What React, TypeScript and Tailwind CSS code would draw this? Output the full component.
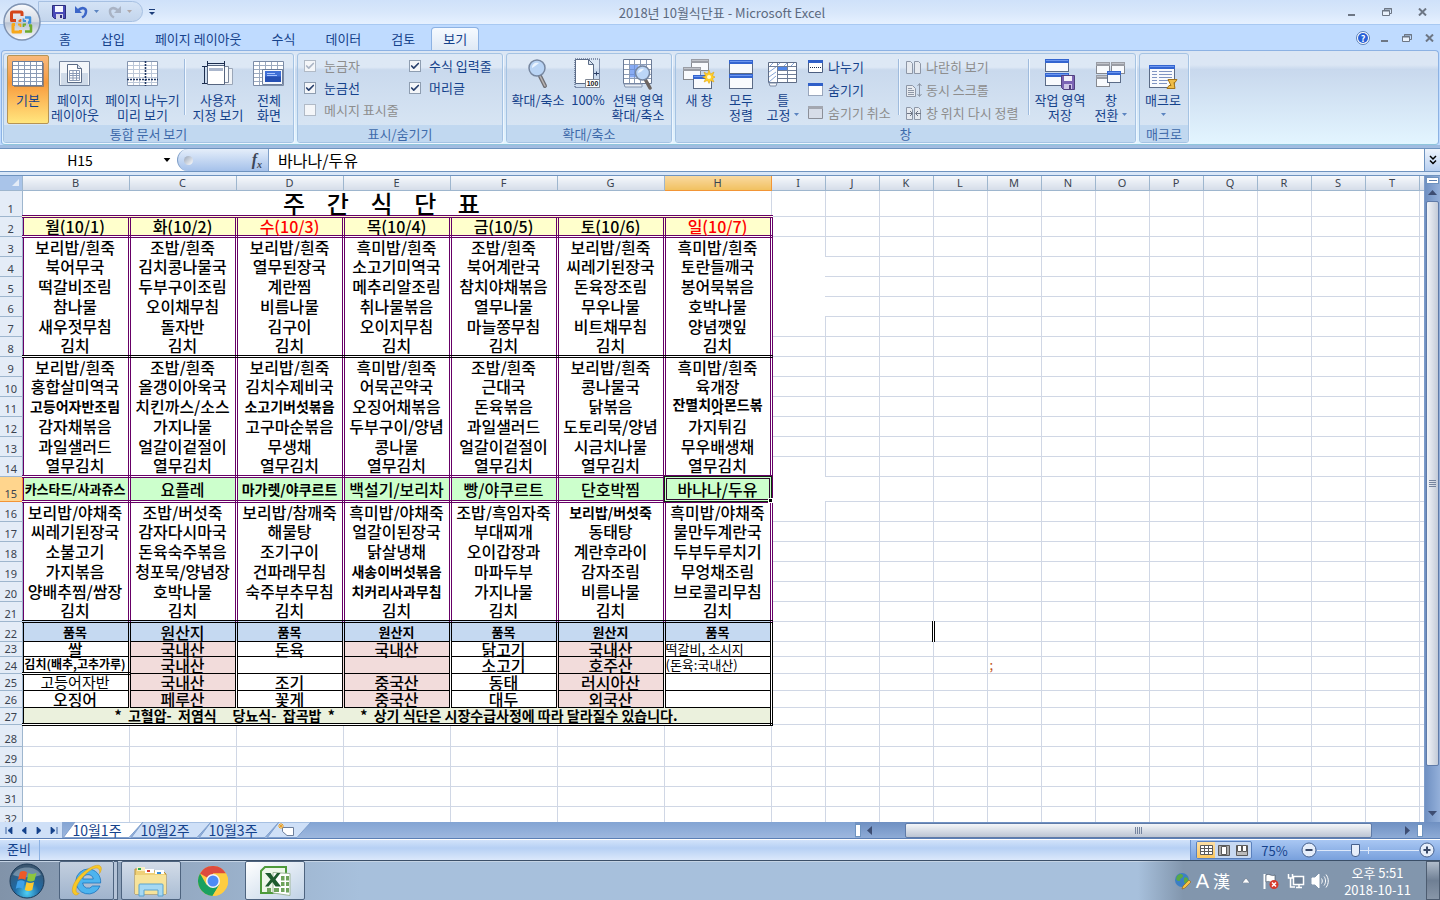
import React, { useState } from 'react';
import { Check } from 'lucide-react';

interface Cell {
  text: string;
  size: 'md' | 'note' | 'sm' | 'xs' | 'xxs';
}

const FONT = "font-['Noto_Sans_CJK_KR','Noto_Sans',sans-serif]";

const columns = ['B', 'C', 'D', 'E', 'F', 'G', 'H'];
const extraColumns = ['I', 'J', 'K', 'L', 'M', 'N', 'O', 'P', 'Q', 'R', 'S', 'T', ''];

const days = ['월(10/1)', '화(10/2)', '수(10/3)', '목(10/4)', '금(10/5)', '토(10/6)', '일(10/7)'];
const holidays = [2, 6];

// rows 3 - 21, a leading mark picks a smaller text size (see parse)
const meals: string[][] = [
  ['보리밥/흰죽', '조밥/흰죽', '보리밥/흰죽', '흑미밥/흰죽', '조밥/흰죽', '보리밥/흰죽', '흑미밥/흰죽'],
  ['북어무국', '김치콩나물국', '열무된장국', '소고기미역국', '북어계란국', '씨레기된장국', '토란들깨국'],
  ['떡갈비조림', '두부구이조림', '계란찜', '메추리알조림', '참치야채볶음', '돈육장조림', '봉어묵볶음'],
  ['참나물', '오이채무침', '비름나물', '취나물볶음', '열무나물', '무우나물', '호박나물'],
  ['새우젓무침', '돌자반', '김구이', '오이지무침', '마늘쫑무침', '비트채무침', '양념깻잎'],
  ['김치', '김치', '김치', '김치', '김치', '김치', '김치'],
  ['보리밥/흰죽', '조밥/흰죽', '보리밥/흰죽', '흑미밥/흰죽', '조밥/흰죽', '보리밥/흰죽', '흑미밥/흰죽'],
  ['홍합살미역국', '올갱이아욱국', '김치수제비국', '어묵곤약국', '근대국', '콩나물국', '육개장'],
  ['~고등어자반조림', '치킨까스/소스', '~소고기버섯볶음', '오징어채볶음', '돈육볶음', '닭볶음', '~잔멸치아몬드볶음'],
  ['감자채볶음', '가지나물', '고구마순볶음', '두부구이/양념', '과일샐러드', '도토리묵/양념', '가지튀김'],
  ['과일샐러드', '얼갈이겉절이', '무생채', '콩나물', '얼갈이겉절이', '시금치나물', '무우배생채'],
  ['열무김치', '열무김치', '열무김치', '열무김치', '열무김치', '열무김치', '열무김치'],
  ['^카스타드/사과쥬스', '요플레', '~마가렛/야쿠르트', '백설기/보리차', '빵/야쿠르트', '단호박찜', '바나나/두유'],
  ['보리밥/야채죽', '조밥/버섯죽', '보리밥/참깨죽', '흑미밥/야채죽', '조밥/흑임자죽', '~보리밥/버섯죽', '흑미밥/야채죽'],
  ['씨레기된장국', '감자다시마국', '해물탕', '얼갈이된장국', '부대찌개', '동태탕', '물만두계란국'],
  ['소불고기', '돈육숙주볶음', '조기구이', '닭살냉채', '오이갑장과', '계란후라이', '두부두루치기'],
  ['가지볶음', '청포묵/양념장', '건파래무침', '~새송이버섯볶음', '마파두부', '감자조림', '무엉채조림'],
  ['양배추찜/쌈장', '호박나물', '숙주부추무침', '~치커리사과무침', '가지나물', '비름나물', '브로콜리무침'],
  ['김치', '김치', '김치', '김치', '김치', '김치', '김치'],
];

// rows 22 - 26
const origins: string[][] = [
  ['^품목', '원산지', '^품목', '^원산지', '^품목', '^원산지', '^품목'],
  ['쌀', '국내산', '돈육', '국내산', '닭고기', '국내산', '떡갈비, 소시지'],
  ['_김치(배추,고추가루)', '국내산', '', '', '소고기', '호주산', '(돈육:국내산)'],
  ['=고등어자반', '국내산', '조기', '중국산', '동태', '러시아산', ''],
  ['오징어', '페루산', '꽃게', '중국산', '대두', '외국산', ''],
];

const marks: Record<string, Cell['size']> = { '=': 'note', '~': 'sm', '^': 'xs', _: 'xxs' };

const parse = (raw: string): Cell => {
  const size = marks[raw[0]];
  return size ? { text: raw.slice(1), size } : { text: raw, size: 'md' };
};

const sizeClass = {
  md: 'text-[16px] font-medium',
  note: 'text-[15px] font-normal',
  sm: 'text-[14px] font-bold',
  xs: 'text-[13px] font-bold',
  xxs: 'text-[12px] font-bold',
};

const rowHeights: Record<number, string> = {
  1: 'h-[26px]',
  15: 'h-[25px]',
  23: 'h-[15px]',
  24: 'h-[17px]',
  25: 'h-[17px]',
  26: 'h-[17px]',
  27: 'h-[17px]',
  28: 'h-[22px]',
};

/* ---------- icons ---------- */

const Caret = ({ className = 'fill-[#5b84c0]' }: { className?: string }) => (
  <svg width="5" height="3" viewBox="0 0 5 3" className={className}>
    <path d="M0 0h5L2.5 3z" />
  </svg>
);

const GridIcon = () => (
  <svg width="32" height="26" viewBox="0 0 32 26">
    <path d="M.5.5h30v24H.5z" fill="#fff" stroke="#6c7d99" />
    <path d="M6.5 1v23M12.5 1v23M18.5 1v23M24.5 1v23M1 4.5h29M1 8.5h29M1 12.5h29M1 16.5h29M1 20.5h29" stroke="#8b9bb5" />
    <path d="M31.5 2v23.500H2" stroke="#56657f" fill="none" opacity=".6" />
  </svg>
);

const PageLayoutIcon = () => (
  <svg width="32" height="26" viewBox="0 0 32 26">
    <path d="M.5.5h30v24H.5z" fill="#f3f6fa" stroke="#7686a0" />
    <path d="M2 12h27v12H2z" fill="#cfdae8" />
    <path d="M8.500 3.500h10l4 4v14h-14z" fill="#fff" stroke="#5b6b86" />
    <path d="M18.500 3.500v4h4" fill="#dfe6f0" stroke="#5b6b86" />
    <path d="M10.500 9.500h10v10h-10zM10.500 12.500h10M10.500 14.500h10M10.500 17h10M14 9.500v10M17.500 9.500v10" fill="none" stroke="#8b9bb5" />
  </svg>
);

const PageBreakIcon = () => (
  <svg width="32" height="26" viewBox="0 0 32 26">
    <path d="M.5.500h30v24H.5z" fill="#fff" stroke="#8494ae" />
    <path d="M6.500 1v23M12.500 1v23M24.500 1v23M1 4.500h29M1 8.500h29M1 12.500h29M1 16.500h29M1 21.500h29" stroke="#bcc7d8" />
    <path d="M18.500 0v25M0 18.500h31" stroke="#1f3763" strokeWidth="1.600" strokeDasharray="2 1" />
  </svg>
);

const CustomViewIcon = () => (
  <svg width="32" height="26" viewBox="0 0 32 26">
    <path d="M14.500 7.500h16v16h-16z" fill="#f0f3f7" stroke="#9aa6b8" />
    <path d="M10.500 5.500h16v16h-16z" fill="#f8fafc" stroke="#7b879b" />
    <path d="M5.500 4.500h17v19h-17z" fill="#fff" stroke="#56657f" />
    <path d="M7 7h14v3H7z" fill="#aab6cc" />
    <path d="M5 2.500h18M5.500 0v5M22.500 0v5M2.500 5v17M0 5.500h5M0 22.500h5" stroke="#1b2c4d" />
  </svg>
);

const FullScreenIcon = () => (
  <svg width="32" height="26" viewBox="0 0 32 26">
    <path d="M.5.500h30v24H.5z" fill="#fff" stroke="#7b8ba6" />
    <path d="M6.500 1v23M12.500 1v23M18.500 1v23M24.500 1v23M1 4.500h29M1 8.500h29M1 12.500h29M1 16.500h29M1 20.500h29" stroke="#9caac0" />
    <path d="M9.500 8.500h20v15h-20z" fill="#f4f7fc" stroke="#6d7f9c" />
    <path d="M12 10h16v11H12z" fill="#3f6fd6" />
    <path d="M12 15.500h16V21H12z" fill="#2650b4" />
    <path d="M14 12.500h8M14 14.500h10" stroke="#a8c4ff" />
  </svg>
);

const ZoomIcon = () => (
  <svg width="22" height="32" viewBox="0 0 22 32">
    <path d="M13 18l5 10" stroke="#6f6f74" strokeWidth="4" strokeLinecap="round" />
    <path d="M13 18l5 10" stroke="#b9b4b2" strokeWidth="1.500" strokeLinecap="round" />
    <circle cx="10" cy="10" r="8" fill="#b9d4f5" stroke="#76869f" strokeWidth="1.500" />
    <path d="M5 10c0-4 3-6 7-5-2 2-4 3-7 5z" fill="#eaf4ff" />
  </svg>
);

const HundredIcon = () => (
  <svg width="28" height="32" viewBox="0 0 28 32">
    <path d="M1 1h24.500v28.500H1z" fill="none" stroke="#2c3f66" strokeDasharray="1 1" />
    <path d="M1.500 1.500h13l5 5v19h-18z" fill="#fff" stroke="#5b6b86" />
    <path d="M14.500 1.500v5h5z" fill="#dbe4f0" stroke="#5b6b86" />
    <path d="M20 15.500h5M22.500 13.500v4" stroke="#2c3f66" fill="none" />
    <path d="M11.500 21.500h14v8h-14z" fill="#fff" stroke="#7f8794" />
    <text x="18.500" y="28" textAnchor="middle" fontSize="7" fontWeight="700" fontFamily="Liberation Sans, sans-serif" fill="#222">100</text>
  </svg>
);

const ZoomSelectionIcon = () => (
  <svg width="32" height="32" viewBox="0 0 32 32">
    <path d="M1.500 1.500h28v24h-28z" fill="#fff" stroke="#6b7b97" />
    <path d="M7.500 6.500h16v14h-16z" fill="#c9dafb" />
    <path d="M7.500 2v23M12.500 2v23M18.500 2v23M24.500 2v23M2 6.500h27M2 11.500h27M2 16.500h27M2 20.500h27" stroke="#8b9bb5" />
    <path d="M8 7h8v12H8z" fill="#5f8df0" opacity=".6" />
    <path d="M2 26h18v3H3z" fill="#e8edf4" stroke="#8494ae" />
    <path d="M23 21l5 9" stroke="#6c6460" strokeWidth="3.500" strokeLinecap="round" />
    <circle cx="20.500" cy="15" r="7" fill="#bcd6f7" stroke="#76869f" strokeWidth="1.500" />
    <path d="M16 15c0-3 3-5 6-4-2 2-3 3-6 4z" fill="#eef6ff" />
  </svg>
);

const Win = ({ x, y, w, h, grey }: { x: number; y: number; w: number; h: number; grey?: boolean }) => (
  <g>
    <rect x={x + 0.5} y={y + 0.5} width={w - 1} height={h - 1} fill="#f8fafd" stroke={grey ? '#85888f' : '#5b6b86'} />
    <rect x={x} y={y} width={w} height="4" fill={grey ? '#9a9da5' : '#3465d0'} />
    <rect x={x + 1} y={y + 1} width={w - 2} height="1" fill={grey ? '#c0c3ca' : '#6d97f0'} />
  </g>
);

const NewWindowIcon = () => (
  <svg width="32" height="32" viewBox="0 0 32 32">
    <Win x={8} y={1} w={18} h={12} grey />
    <Win x={0} y={9} w={18} h={13} grey />
    <Win x={10} y={17} w={19} h={14} />
    <path d="M26 12l1.500 4 3.500-2-1.500 4 3 1-3 1.500 1.500 3.500-3.500-1.500-1.500 3-1.500-3-3.500 1.500 1.500-3.500-3-1.500 3-1-1.500-4 3.500 2z" fill="#ffcf2d" stroke="#e0a100" strokeWidth=".5" />
    <circle cx="26" cy="19" r="2" fill="#fffbd0" />
  </svg>
);

const ArrangeIcon = () => (
  <svg width="26" height="32" viewBox="0 0 26 32">
    <Win x={1} y={2} w={24} h={14} />
    <Win x={1} y={16} w={24} h={15} />
  </svg>
);

const FreezeIcon = () => (
  <svg width="30" height="32" viewBox="0 0 30 32">
    <path d="M.5 4.500h28v20H.5z" fill="#fff" stroke="#5f6d86" />
    <path d="M9 9h10v4H9z" fill="#4f86e8" />
    <path d="M9.500 5v19M19.500 5v19M1 8.500h27M9 12.500h19M9 16.500h19M9 20.500h19" stroke="#6f7e98" />
    <path d="M2 8l3-3M9 8l3-3M16 8l3-3M23 8l3-3M1 14l7-5M1 19l7-5M1 24l7-6" stroke="#86a5d6" />
    <path d="M1 25h8l-1 3H2z" fill="#f3f6fa" stroke="#7f8da6" />
  </svg>
);

const SaveWorkspaceIcon = () => (
  <svg width="32" height="32" viewBox="0 0 32 32">
    <Win x={1} y={1} w={24} h={13} />
    <Win x={1} y={15} w={24} h={13} />
    <path d="M17.500 17.500h13v14h-11l-2-2z" fill="#7c64b4" stroke="#51407e" />
    <path d="M20 18h8v5h-8z" fill="#f3eff9" />
    <path d="M20 26h8v5h-8z" fill="#cfc6e6" />
    <path d="M25 27h2v4h-2z" fill="#51407e" />
  </svg>
);

const SwitchWindowIcon = () => (
  <svg width="30" height="32" viewBox="0 0 30 32">
    <Win x={0} y={4} w={14} h={12} grey />
    <Win x={15} y={4} w={14} h={12} grey />
    <Win x={0} y={17} w={14} h={12} grey />
    <Win x={11} y={13} w={14} h={12} />
  </svg>
);

const MacroIcon = () => (
  <svg width="30" height="32" viewBox="0 0 30 32">
    <Win x={1} y={7} w={26} h={23} />
    <path d="M4 13.500h5M4 16.500h5M4 19.500h5M4 22.500h5M4 25.500h5M11 13.500h13M11 16.500h13M11 19.500h13M11 22.500h13M11 25.500h8" stroke="#7f94c2" />
    <path d="M20 21.500h9l-2 3h-1l1 6h-8l2-3h2z" fill="#eebc48" stroke="#a3741a" />
  </svg>
);

const SmallWindow = ({ kind }: { kind: 'split' | 'hide' | 'unhide' }) => (
  <svg width="16" height="14" viewBox="0 0 16 14">
    <path d="M.5.500h14v12H.5z" fill="#fff" stroke={kind === 'unhide' ? '#8b8f98' : '#4c5e80'} strokeDasharray={kind === 'hide' ? '1 1' : undefined} />
    <path d="M0 0h15v3H0z" fill={kind === 'unhide' ? '#a3a7b0' : '#2f5fc8'} />
    {kind === 'split' && <path d="M2 7.500h12" stroke="#1b2c4d" strokeDasharray="1 1" />}
    {kind === 'unhide' && <path d="M1 3h13v9H1z" fill="#d7dde8" />}
  </svg>
);

const SidePages = ({ kind }: { kind: 'side' | 'sync' | 'reset' }) => (
  <svg width="16" height="14" viewBox="0 0 16 14" fill="#e6eaf0" stroke="#8d96a6">
    {kind === 'sync' ? (
      <>
        <path d="M.5 2.500h6l3 3v8h-9zM2 5.500h4M2 7.500h6M2 9.500h6M2 11.500h6" />
        <path d="M13.500 1v12M11.500 3l2-2.500 2 2.500M11.500 11l2 2.500 2-2.500" fill="none" />
      </>
    ) : (
      <>
        <path d="M.5 1.500h4l2 2v10h-6zM8.500 1.500h4l2 2v10h-6z" />
        {kind === 'reset' && <path d="M1 7.500h5M4 5l2.500 2.500L4 10M15 7.500h-5M12 5L9.500 7.500 12 10" stroke="#6d7585" />}
      </>
    )}
  </svg>
);

const WindowControls = ({ className }: { className: string }) => (
  <div className={`flex items-center ${className}`}>
    <button aria-label="최소화" className="w-4 h-4 flex items-center justify-center">
      <svg width="8" height="10" viewBox="0 0 8 10"><path d="M0 7h7v2H0z" fill="#6d7684" /></svg>
    </button>
    <button aria-label="이전 크기로" className="w-4 h-4 flex items-center justify-center">
      <svg width="10" height="8" viewBox="0 0 10 8" fill="none" stroke="#6d7684">
        <path d="M2.500 2V.500h7v5H8" /><path d="M.5 2.500h7v5h-7z" fill="#e9f1fb" /><path d="M2 1h8M0 3h8" />
      </svg>
    </button>
    <button aria-label="닫기" className="w-4 h-4 flex items-center justify-center">
      <svg width="9" height="8" viewBox="0 0 9 8"><path d="M1 .5l7 7M8 .5l-7 7" stroke="#6d7684" strokeWidth="2" /></svg>
    </button>
  </div>
);

/* ---------- ribbon ---------- */

const Group = ({ title, className = '', children }: { title: string; className?: string; children: React.ReactNode }) => (
  <section className={`flex flex-col h-[90px] border border-[#a5c3e3] rounded-[3px] overflow-hidden shadow-[1px_1px_0_#eef6ff] bg-linear-to-b from-[#dde8f5] from-15% via-[#c9d9ed] via-18% to-[#dbe8f5] ${className}`}>
    <div className="flex h-[71px] pt-px">{children}</div>
    <h2 className="flex-1 text-center leading-[17px] text-[#3e6aaa] bg-[#c1d8f0]">{title}</h2>
  </section>
);

interface BigButtonProps {
  icon: React.ReactNode;
  lines: string[];
  className: string;
  dropdown?: boolean;
  active?: boolean;
}

const BigButton = ({ icon, lines, className, dropdown, active }: BigButtonProps) => (
  <button
    className={`flex flex-col items-center shrink-0 h-[69px] whitespace-nowrap leading-[15px] text-[#15428b] ${className} ${
      active ? 'border border-[#b69454] rounded-[2px] bg-linear-to-b from-[#f8b97c] via-[#f79a3c] via-40% to-[#ffe67e]' : 'border border-transparent'
    }`}
  >
    <span className="flex items-center justify-center h-[36px]">{icon}</span>
    <span>{lines[0]}</span>
    <span className="flex items-center gap-1 h-[15px]">
      {lines[1]}
      {dropdown && <Caret />}
    </span>
  </button>
);

const Separator = () => <div className="w-px h-[56px] mt-1 bg-[#9fbbdd] shadow-[1px_0_0_#f0f7ff] shrink-0" />;

const CheckOption = ({ label, checked, disabled }: { label: string; checked?: boolean; disabled?: boolean }) => (
  <label className={`relative flex items-center h-[22px] gap-[8px] whitespace-nowrap ${disabled ? 'text-[#8d8d8d]' : 'text-[#15428b]'}`}>
    <input
      type="checkbox"
      defaultChecked={checked}
      disabled={disabled}
      className="peer appearance-none w-[12px] h-[12px] border border-[#8e9db0] bg-[#f4f6f9] disabled:border-[#b1bac6] shrink-0"
    />
    <Check className={`absolute left-[1px] w-[10px] h-[10px] hidden peer-checked:block pointer-events-none ${disabled ? 'text-[#aab4c4]' : 'text-[#28406e]'}`} strokeWidth={4} />
    {label}
  </label>
);

const SmallButton = ({ icon, label, disabled }: { icon: React.ReactNode; label: string; disabled?: boolean }) => (
  <button disabled={disabled} className={`flex items-center gap-[4px] h-[23px] whitespace-nowrap ${disabled ? 'text-[#8d8d8d]' : 'text-[#15428b]'}`}>
    {icon}
    {label}
  </button>
);

const Ribbon = () => (
  <div className="px-px bg-[#bfdbff]">
    <div className="flex gap-[3px] h-[95px] pt-[2px] pl-px border border-[#8db2e3] border-b-[#8fc6dc] rounded-[4px] bg-linear-to-b from-[#dbe6f4] from-15% via-[#c8d8ed] via-20% to-[#e3f5ff] overflow-hidden">
      <Group title="통합 문서 보기" className="w-[291px]">
        <BigButton active icon={<GridIcon />} lines={['기본']} className="w-[42px] ml-[3px]" />
        <BigButton icon={<PageLayoutIcon />} lines={['페이지', '레이아웃']} className="w-[52px]" />
        <BigButton icon={<PageBreakIcon />} lines={['페이지 나누기', '미리 보기']} className="w-[83px]" />
        <Separator />
        <BigButton icon={<CustomViewIcon />} lines={['사용자', '지정 보기']} className="w-[66px]" />
        <BigButton icon={<FullScreenIcon />} lines={['전체', '화면']} className="w-[36px]" />
      </Group>
      <Group title="표시/숨기기" className="w-[206px]">
        <div className="w-[105px] pl-[6px]">
          <CheckOption label="눈금자" checked disabled />
          <CheckOption label="눈금선" checked />
          <CheckOption label="메시지 표시줄" disabled />
        </div>
        <div className="pl-[6px]">
          <CheckOption label="수식 입력줄" checked />
          <CheckOption label="머리글" checked />
        </div>
      </Group>
      <Group title="확대/축소" className="w-[166px]">
        <BigButton icon={<ZoomIcon />} lines={['확대/축소']} className="w-[54px] ml-[4px]" />
        <BigButton icon={<HundredIcon />} lines={['100%']} className="w-[46px]" />
        <BigButton icon={<ZoomSelectionIcon />} lines={['선택 영역', '확대/축소']} className="w-[54px]" />
      </Group>
      <Group title="창" className="w-[461px]">
        <BigButton icon={<NewWindowIcon />} lines={['새 창']} className="w-[42px] ml-[2px]" />
        <BigButton icon={<ArrangeIcon />} lines={['모두', '정렬']} className="w-[42px]" />
        <BigButton icon={<FreezeIcon />} lines={['틀', '고정']} dropdown className="w-[42px]" />
        <div className="ml-[4px] w-[90px]">
          <SmallButton icon={<SmallWindow kind="split" />} label="나누기" />
          <SmallButton icon={<SmallWindow kind="hide" />} label="숨기기" />
          <SmallButton icon={<SmallWindow kind="unhide" />} label="숨기기 취소" disabled />
        </div>
        <Separator />
        <div className="ml-[7px] w-[122px]">
          <SmallButton icon={<SidePages kind="side" />} label="나란히 보기" disabled />
          <SmallButton icon={<SidePages kind="sync" />} label="동시 스크롤" disabled />
          <SmallButton icon={<SidePages kind="reset" />} label="창 위치 다시 정렬" disabled />
        </div>
        <Separator />
        <BigButton icon={<SaveWorkspaceIcon />} lines={['작업 영역', '저장']} className="w-[62px]" />
        <BigButton icon={<SwitchWindowIcon />} lines={['창', '전환']} dropdown className="w-[40px]" />
      </Group>
      <Group title="매크로" className="w-[50px]">
        <BigButton icon={<MacroIcon />} lines={['매크로', '']} dropdown className="w-[46px]" />
      </Group>
    </div>
  </div>
);

const OfficeButton = () => (
  <button aria-label="Office 단추" className="absolute left-[3px] top-[3px] w-[38px] h-[38px]">
    <svg width="38" height="38" viewBox="0 0 38 38">
      <defs>
        <linearGradient id="orb" x1="0" y1="0" x2="0" y2="1">
          <stop offset="0" stopColor="#fafbfd" />
          <stop offset=".5" stopColor="#d3d9e3" />
          <stop offset=".52" stopColor="#b7c2d3" />
          <stop offset="1" stopColor="#fff" />
        </linearGradient>
      </defs>
      <circle cx="19" cy="19" r="18" fill="url(#orb)" stroke="#7f93b2" strokeWidth="1.500" />
      <g fill="none" strokeLinejoin="round">
        <path d="M13 17.500H8.500V10q0-1 1-1H18q1 0 1 1v3" stroke="#d4461a" strokeWidth="3" />
        <path d="M22 14.500h5v5h-2" stroke="#3e8fdc" strokeWidth="2.500" />
        <path d="M12 21.500H10v7.500h7.500v-2" stroke="#f7a81b" strokeWidth="3" />
        <path d="M22 28.500h6v-6h-2" stroke="#6eab2e" strokeWidth="2.500" />
        <path d="M15.500 18h2v-2" stroke="#e2702a" strokeWidth="1.800" />
        <path d="M20.500 15.500V18H23" stroke="#3e8fdc" strokeWidth="1.800" />
        <path d="M15 21.500h2.500V24" stroke="#f7a81b" strokeWidth="1.800" />
        <path d="M20.500 24v-2.500H23" stroke="#6eab2e" strokeWidth="1.800" />
      </g>
    </svg>
  </button>
);

const TitleBar = () => (
  <header className="relative">
    <div className="flex items-center h-[25px] border-b border-[#a8c9f2] bg-linear-to-b from-[#cfe1fa] via-[#d8e7fb] to-[#e6f1ff]">
      <div className="flex items-center gap-[9px] ml-[38px] pl-[13px] w-[105px] h-[21px] mb-px border border-[#a6c0e2] rounded-r-full bg-linear-to-b from-[#d4e3f6] to-[#c3d5ec]">
        <button aria-label="저장">
          <svg width="14" height="14" viewBox="0 0 14 14">
            <path d="M.5.500h13v13h-11l-2-2z" fill="#4a4bb8" stroke="#2c2d7c" />
            <path d="M3 1h8v6H3z" fill="#f4f6ff" /><path d="M4 9h7v5H4z" fill="#d5d7ea" /><path d="M8 10h2v3H8z" fill="#2c2d7c" />
          </svg>
        </button>
        <button aria-label="실행 취소" className="flex items-center gap-[6px]">
          <svg width="13" height="14" viewBox="0 0 13 14"><path d="M3 5.500C7 1.500 11.500 3 11 7c-.3 3-2 4.500-4 5.500" fill="none" stroke="#3c66c8" strokeWidth="2.500" /><path d="M0 1v7h7z" fill="#3c66c8" /></svg>
          <Caret />
        </button>
        <button aria-label="다시 실행" disabled className="flex items-center gap-[6px]">
          <svg width="13" height="14" viewBox="0 0 13 14"><path d="M10 5.500C6 1.500 1.500 3 2 7c.3 3 2 4.500 4 5.500" fill="none" stroke="#a9b3c4" strokeWidth="2.500" /><path d="M13 1v7H6z" fill="#a9b3c4" /></svg>
          <Caret className="fill-[#b0a8a8]" />
        </button>
      </div>
      <button aria-label="빠른 실행 도구 모음 사용자 지정" className="ml-[6px]">
        <svg width="7" height="7" viewBox="0 0 7 7"><path d="M0 .5h6" stroke="#1c3d7a" /><path d="M0 3h6L3 6z" fill="#1c3d7a" /></svg>
      </button>
      <h1 className="flex-1 text-center text-[#5c6a80] whitespace-nowrap pr-[56px] pt-[2px]">2018년 10월식단표 - Microsoft Excel</h1>
      <WindowControls className="gap-[19px] mr-[10px]" />
    </div>
    <nav className="flex items-end h-[25px] pl-[45px] gap-[2px] bg-[#bfdbff] text-[#15428b]">
      {['홈', '삽입', '페이지 레이아웃', '수식', '데이터', '검토', '보기'].map((tab) => (
        <button
          key={tab}
          className={`h-[23px] whitespace-nowrap border border-b-0 rounded-t-[4px] ${
            tab === '보기' ? 'px-[11px] bg-linear-to-b from-[#f6faff] to-[#dfe9f5] border-[#8db2e3]' : 'px-[13px] border-transparent'
          }`}
        >
          {tab}
        </button>
      ))}
      <div className="flex-1" />
      <div className="flex items-center h-full pr-[3px]">
        <button aria-label="도움말">
          <svg width="14" height="14" viewBox="0 0 14 14">
            <circle cx="7" cy="7" r="6.500" fill="#fff" stroke="#5a7fb8" />
            <circle cx="7" cy="7" r="5" fill="#2a62d8" />
            <text x="7" y="10.500" textAnchor="middle" fontSize="9" fontWeight="700" fill="#fff">?</text>
          </svg>
        </button>
        <WindowControls className="gap-[6px] ml-[7px]" />
      </div>
    </nav>
    <OfficeButton />
  </header>
);

const FormulaBar = () => (
  <div className="pt-[3px] bg-linear-to-b from-[#9fbbe0] to-[#bed4f0]">
    <div className="flex h-[24px] border-y border-[#6e93bf] bg-white">
      <div className="flex items-center w-[177px]">
        <input aria-label="이름 상자" defaultValue="H15" className="w-[160px] text-center text-[14px] text-black outline-none" />
        <button aria-label="이름 목록" className="pl-[3px]"><Caret className="fill-black w-[8px] h-[4px]" /></button>
      </div>
      <div className="flex items-center justify-between w-[92px] pl-[6px] pr-[6px] border border-y-0 border-[#7f9fc8] rounded-l-full bg-linear-to-b from-[#e5eefa] to-[#a5c1ea]">
        <span className="w-[9px] h-[9px] rounded-full bg-linear-to-br from-[#9aa6b8] to-white" />
        <button aria-label="함수 삽입" className="font-['Liberation_Serif',serif] italic font-bold text-[16px] leading-4 text-[#3c4658]">
          f<sub className="text-[10px]">x</sub>
        </button>
      </div>
      <input aria-label="수식 입력줄" defaultValue="바나나/두유" className="flex-1 pl-[9px] text-[16px] text-black outline-none" />
      <button aria-label="수식 입력줄 확장" className="flex items-center justify-center w-[16px] border-l border-[#6e93bf] bg-linear-to-b from-[#eef4fc] to-[#b7cff0]">
        <svg width="8" height="10" viewBox="0 0 8 10" fill="none" stroke="#000" strokeWidth="1.500"><path d="M1 1l3 3 3-3M1 5.500l3 3 3-3" /></svg>
      </button>
    </div>
    <div className="h-[3px] bg-[#d9e7f8]" />
  </div>
);

/* ---------- worksheet ---------- */

const doubleRight = 'border-r-[3px] [border-right-style:double]';
const doubleBottom = 'border-b-[3px] [border-bottom-style:double]';

const RowHeader = ({ n }: { n: number }) => (
  <th
    scope="row"
    className={`p-0 align-bottom font-normal text-[11px] leading-[14px] font-['Noto_Sans',sans-serif] text-[#3a4350] border-r border-b ${
      n === 15 ? 'bg-[#ffd58d] border-[#f29536]' : 'bg-[#e4ecf7] border-[#9eb6ce]'
    }`}
  >
    {n}
  </th>
);

const EmptyCells = ({ n }: { n: number }) => (
  <>
    {extraColumns.map((col) => {
      let lines = 'border-r border-b border-[#d0d7e5]';
      if (col === 'I') {
        if (n === 3 || n === 14) lines = 'border-r border-[#d0d7e5]';
        if ((n >= 4 && n <= 6) || n === 15) lines = '';
      }
      if (col === 'K' && n === 22) lines = `border-b border-b-[#d0d7e5] ${doubleRight} border-r-black`;
      return (
        <td key={col} className={`p-0 align-middle ${lines}`}>
          {col === 'M' && n === 24 && <div className="pl-[2px] leading-3 text-[#c0501a]">;</div>}
        </td>
      );
    })}
  </>
);

const MealCell = ({ raw, n, index }: { raw: string; n: number; index: number }) => {
  const { text, size } = parse(raw);
  const selected = n === 15 && index === 6;
  let bottom = '';
  if (n === 8 || n === 21) bottom = `${doubleBottom} border-b-black`;
  if (n === 14 || n === 15) bottom = `${doubleBottom} border-b-[#660066]`;
  return (
    <td
      className={`relative p-0 text-center align-middle leading-3 ${sizeClass[size]} ${doubleRight} border-r-[#660066] ${bottom} ${
        n === 15 ? 'bg-[#ccffcc]' : 'bg-white'
      } ${index === 0 ? 'shadow-[inset_1px_0_#660066]' : ''}`}
    >
      {text.length > 7 && n === 11 ? (
        <div className="h-[17px] leading-[13px] overflow-hidden whitespace-normal break-all px-[5px]">{text}</div>
      ) : (
        <div className="whitespace-nowrap">{text}</div>
      )}
      {selected && (
        <>
          <div className="absolute -inset-[2px] border border-[#0c2a0c] shadow-[inset_0_0_0_1px_#ccffcc,inset_0_0_0_2px_#2e0a2e] pointer-events-none" />
          <div className="absolute -right-[3px] -bottom-[3px] w-[5px] h-[5px] bg-black border border-white" />
        </>
      )}
    </td>
  );
};

const OriginCell = ({ raw, n, index }: { raw: string; n: number; index: number }) => {
  const { text, size } = parse(raw);
  let bg = index % 2 === 1 ? 'bg-[#f2dcdb]' : 'bg-white';
  if (n === 22) bg = 'bg-[#c5d9f1]';
  const note = index === 6 && n > 22;
  const bottom = index === 0 && n === 24 ? doubleBottom : 'border-b';
  return (
    <td
      className={`p-0 align-middle leading-[10px] border-black ${bottom} ${doubleRight} ${bg} ${
        note ? 'text-left text-[13px]' : `text-center ${sizeClass[size]}`
      } ${index === 0 ? 'shadow-[inset_1px_0_#000]' : ''}`}
    >
      <div className="whitespace-nowrap">{text}</div>
    </td>
  );
};

const Sheet = () => {
  const rows = Array.from({ length: 32 }, (_, i) => i + 1);
  return (
    <div className="flex-1 min-w-0 overflow-hidden bg-white">
      <table className="table-fixed w-px border-collapse text-black">
        <colgroup>
          <col className="w-[22px]" />
          {columns.map((c) => <col key={c} className="w-[107px]" />)}
          {extraColumns.map((c) => <col key={c} className="w-[54px]" />)}
        </colgroup>
        <thead>
          <tr className="h-[14px]">
            <th className="p-0 bg-[#a9c4e9] border-r border-b border-[#9eb6ce]">
              <svg width="7" height="7" viewBox="0 0 7 7" className="ml-auto mr-[3px]"><path d="M7 0v7H0z" fill="#e4ecf7" /></svg>
            </th>
            {[...columns, ...extraColumns].map((c) => (
              <th
                key={c}
                scope="col"
                className={`p-0 font-normal text-[11px] leading-3 font-['Noto_Sans',sans-serif] text-[#3a4350] border-r border-b bg-linear-to-b ${
                  c === 'H' ? 'from-[#f9d99f] to-[#f1c15f] border-[#f29536]' : 'from-[#f6f9fc] to-[#d5dde9] border-[#9eb6ce]'
                }`}
              >
                {c}
              </th>
            ))}
          </tr>
        </thead>
        <tbody>
          {rows.map((n) => (
            <tr key={n} className={rowHeights[n] ?? 'h-[20px]'}>
              <RowHeader n={n} />
              {n === 1 && (
                <td colSpan={7} className={`p-0 pr-[30px] text-center text-[24px] leading-5 font-medium whitespace-pre border-r border-r-[#d0d7e5] ${doubleBottom} border-b-[#660066]`}>
                  {'주    간    식    단    표'}
                </td>
              )}
              {n === 2 && days.map((day, i) => (
                <td
                  key={day}
                  className={`p-0 text-center align-middle text-[16px] leading-3 font-medium bg-[#ffffcc] border-[#660066] ${doubleRight} ${doubleBottom} ${
                    holidays.includes(i) ? 'text-[#ff0000]' : ''
                  } ${i === 0 ? 'shadow-[inset_1px_0_#660066]' : ''}`}
                >
                  {day}
                </td>
              ))}
              {n >= 3 && n <= 21 && meals[n - 3].map((raw, i) => <MealCell key={i} raw={raw} n={n} index={i} />)}
              {n >= 22 && n <= 26 && origins[n - 22].map((raw, i) => <OriginCell key={i} raw={raw} n={n} index={i} />)}
              {n === 27 && (
                <td colSpan={7} className={`p-0 text-center text-[14px] leading-[10px] font-bold whitespace-pre bg-[#ebf1dd] border-black ${doubleRight} ${doubleBottom} shadow-[inset_1px_0_#000]`}>
                  {'*  고혈압-  저염식     당뇨식-  잡곡밥  *        *  상기 식단은 시장수급사정에 따라 달라질수 있습니다.'}
                </td>
              )}
              {n > 27 && columns.map((c) => <td key={c} className="p-0 border-r border-b border-[#d0d7e5]" />)}
              <EmptyCells n={n} />
            </tr>
          ))}
        </tbody>
      </table>
    </div>
  );
};

const VerticalScroll = () => (
  <div className="flex flex-col items-center w-[16px] shrink-0 border-l border-[#7d9cc9] bg-linear-to-r from-[#6f90c2] to-[#94b0da]">
    <div className="w-[13px] h-[7px] mt-px border border-[#6e93bf] bg-white flex items-center justify-center"><span className="w-[8px] h-px bg-[#5c7fb0]" /></div>
    <button aria-label="위로" className="h-[17px]"><svg width="9" height="5" viewBox="0 0 9 5"><path d="M0 5h9L4.500 0z" fill="#3d4d72" /></svg></button>
    <div className="flex flex-col items-center justify-center gap-px flex-1 w-[13px] border border-[#5f7ba8] rounded-[2px] bg-linear-to-r from-[#f1f4f8] to-[#c3cbd8]">
      <span className="w-[7px] h-px bg-[#75849e]" />
      <span className="w-[7px] h-px bg-[#75849e]" />
      <span className="w-[7px] h-px bg-[#75849e]" />
      <span className="w-[7px] h-px bg-[#75849e]" />
    </div>
    <button aria-label="아래로" className="flex items-end h-[56px] pb-[6px]"><svg width="9" height="5" viewBox="0 0 9 5"><path d="M0 0h9L4.500 5z" fill="#3d4d72" /></svg></button>
  </div>
);

const SheetTabs = () => {
  const [active, setActive] = useState('10월1주');
  return (
    <div className="flex h-[17px] border-b border-[#5b7fb5] bg-linear-to-b from-[#83a4d3] to-[#9db7de]">
      <div className="flex items-center gap-[7px] w-[63px] pl-[5px] bg-[#cfe0f7] border-r border-[#8ba8d2] shrink-0">
        {['M1 0v7M7 0v7L3 3.500z', 'M6 0v7L2 3.500z', 'M2 0v7l4-3.500z', 'M7 0v7M1 0v7l4-3.500z'].map((d) => (
          <button key={d} aria-label="시트 이동"><svg width="8" height="7" viewBox="0 0 8 7"><path d={d} fill="#15428b" stroke="#15428b" strokeWidth=".8" /></svg></button>
        ))}
      </div>
      {['10월1주', '10월2주', '10월3주'].map((name) => (
        <button
          key={name}
          onClick={() => setActive(name)}
          className="relative w-[68px] shrink-0 text-[14px] leading-4 text-[#15428b] whitespace-nowrap"
        >
          <svg width="80" height="16" viewBox="0 0 80 16" className="absolute left-0 top-0">
            <path d="M0 16L12 0h68L66 15.500H2z" fill={name === active ? '#fff' : '#cfe0f7'} stroke="#7f9fcd" />
          </svg>
          <span className="relative">{name}</span>
        </button>
      ))}
      <button aria-label="워크시트 삽입" className="relative w-[44px] shrink-0">
        <svg width="44" height="16" viewBox="0 0 44 16">
          <path d="M0 16L12 0h32L30 15.500H2z" fill="#cfe0f7" stroke="#7f9fcd" />
          <path d="M15.500 5.500h11v8H20l-4.500-4z" fill="#fff" stroke="#6d7f9c" />
          <path d="M14 1v6M11 4h6M12 2l4 4M16 2l-4 4" stroke="#eda020" />
        </svg>
      </button>
      <div className="flex-1" />
      <div className="flex items-center w-[585px] bg-linear-to-b from-[#6f90c2] to-[#8eabd6]">
        <span className="w-[6px] h-[13px] bg-white border border-[#6e93bf]" />
        <button aria-label="왼쪽" className="px-[6px]"><svg width="5" height="9" viewBox="0 0 5 9"><path d="M5 0v9L0 4.500z" fill="#3d4d72" /></svg></button>
        <div className="flex items-center justify-center gap-px flex-1 h-[15px] ml-[27px] border border-[#5f7ba8] rounded-[2px] bg-linear-to-b from-[#f4f6f9] to-[#bcc5d3]">
          <span className="w-px h-[7px] bg-[#75849e]" />
          <span className="w-px h-[7px] bg-[#75849e]" />
          <span className="w-px h-[7px] bg-[#75849e]" />
          <span className="w-px h-[7px] bg-[#75849e]" />
        </div>
        <button aria-label="오른쪽" className="pl-[33px] pr-[7px]"><svg width="5" height="9" viewBox="0 0 5 9"><path d="M0 0v9l5-4.500z" fill="#3d4d72" /></svg></button>
        <span className="w-[6px] h-[13px] bg-white border border-[#6e93bf] mr-[17px]" />
      </div>
    </div>
  );
};

const StatusBar = () => (
  <footer className="flex h-[21px] border-t border-white bg-linear-to-b from-[#d2e3fa] via-[#b6d0f4] via-40% to-[#dbe8fb] text-[#15428b]">
    <div className="w-[40px] pl-[7px] leading-[17px] border-r border-[#8db2e3]">준비</div>
    <div className="flex-1" />
    <div className="flex items-center pl-[5px] border-l border-[#6c93cf] bg-linear-to-b from-[#a9c7f3] to-[#78a0dc]">
      <div className="flex h-[18px] border border-[#5a80bd] rounded-[2px] bg-[#c7d9f2] overflow-hidden">
        <button aria-label="기본" className="flex items-center justify-center w-[18px] bg-linear-to-b from-[#fde0a6] to-[#fbc75c]">
          <svg width="13" height="10" viewBox="0 0 13 10"><path d="M.5.500h12v9H.5zM4.500 0v10M8.500 0v10M0 3.500h13M0 6.500h13" fill="#fff" stroke="#5a5a5a" /></svg>
        </button>
        <button aria-label="페이지 레이아웃" className="flex items-center justify-center w-[18px]">
          <svg width="12" height="11" viewBox="0 0 12 11"><path d="M.5.500h11v10H.5z" fill="#aaa" stroke="#5a5a5a" /><path d="M3.500 1.500h5v8h-5z" fill="#fff" stroke="#5a5a5a" /></svg>
        </button>
        <button aria-label="페이지 나누기 미리 보기" className="flex items-center justify-center w-[18px]">
          <svg width="12" height="11" viewBox="0 0 12 11"><path d="M.5.500h11v10H.5z" fill="#bbb" stroke="#5a5a5a" /><path d="M1.500.500h4v6h-4zM6.500.500h4v6h-4z" fill="#fff" stroke="#5a5a5a" /></svg>
        </button>
      </div>
      <span className="w-[45px] mr-[4px] leading-[17px] text-center">75%</span>
      <button aria-label="축소">
        <svg width="16" height="16" viewBox="0 0 16 16"><circle cx="8" cy="8" r="7" fill="#e6eefa" stroke="#45608d" /><path d="M4.500 8h7" stroke="#3a4a68" strokeWidth="2" /></svg>
      </button>
      <div className="relative flex items-center">
        <span className="absolute left-[51px] w-px h-[7px] bg-[#dce8fa]" />
        <input
          type="range"
          aria-label="확대/축소"
          min="0"
          max="100"
          defaultValue="37"
          className="relative appearance-none w-[102px] h-px bg-[#dce8fa] [&::-webkit-slider-thumb]:appearance-none [&::-webkit-slider-thumb]:w-[9px] [&::-webkit-slider-thumb]:h-[13px] [&::-webkit-slider-thumb]:rounded-b-[4px] [&::-webkit-slider-thumb]:border [&::-webkit-slider-thumb]:border-[#45608d] [&::-webkit-slider-thumb]:bg-[#e6eefa]"
        />
      </div>
      <button aria-label="확대" className="pr-[5px]">
        <svg width="16" height="16" viewBox="0 0 16 16"><circle cx="8" cy="8" r="7" fill="#e6eefa" stroke="#45608d" /><path d="M4.500 8h7M8 4.500v7" stroke="#3a4a68" strokeWidth="2" /></svg>
      </button>
    </div>
  </footer>
);

/* ---------- taskbar ---------- */

const StartIcon = () => (
  <svg width="36" height="36" viewBox="0 0 36 36">
    <defs>
      <radialGradient id="start" cx=".5" cy=".85" r=".8">
        <stop offset="0" stopColor="#4fd0f5" />
        <stop offset=".45" stopColor="#1f6aa5" />
        <stop offset="1" stopColor="#3b566f" />
      </radialGradient>
    </defs>
    <circle cx="18" cy="18" r="17" fill="url(#start)" stroke="#1c3a58" />
    <path d="M4 12C8 2 28 2 32 12c-8 3-20 3-28 0z" fill="#fff" opacity=".3" />
    <path d="M11 9c2.500-1.500 4.500-1.300 7 .3L16.300 17c-2.500-1.500-4.700-1.500-7.300-.3z" fill="#ee5a28" />
    <path d="M19.500 10c2.500 1.300 5 1.300 8-.3L25.500 17.500c-2.700 1.300-5 1.200-7.500 0z" fill="#8cc63f" />
    <path d="M8.500 18.200c2.500-1.300 4.700-1.200 7.300.3L14 26c-2.500-1.500-4.700-1.500-7.300-.3z" fill="#3fa0e8" />
    <path d="M17.500 19c2.500 1.400 4.800 1.300 7.500 0L23.300 27c-2.700 1.400-5 1.300-7.500 0z" fill="#fdc82f" />
  </svg>
);

const IeIcon = () => (
  <svg width="34" height="34" viewBox="0 0 34 34">
    <path d="M18 5a12.500 12.500 0 1 0 12 17h-7.500a5.500 5.500 0 0 1-9.900-3h18A12.600 12.600 0 0 0 18 5zm-5.300 10a5.400 5.400 0 0 1 10.600 0z" fill="#4db4ef" stroke="#1a74bd" strokeWidth=".8" />
    <path d="M5.500 31C-1 29 3 17 12 9.500S29-1 31 3c.9 2-.2 4.700-1.500 6.500.6-3-.3-5.500-3.500-5.500C20 4 6 18 6 26c0 2 1 3.300 3.200 3.300-1 1.200-2.400 2-3.700 1.700z" fill="#f8c826" stroke="#d69a10" strokeWidth=".5" />
  </svg>
);

const FolderIcon = () => (
  <svg width="34" height="32" viewBox="0 0 34 32">
    <path d="M1 4h9l2 2h17l3 3v20H1z" fill="#efd078" stroke="#b8923c" />
    <path d="M3 2h8v4H3z" fill="#f9efc5" /><path d="M11 4h9v4h-9z" fill="#fff" /><path d="M21 5h9v4h-9z" fill="#fff" />
    <path d="M4 3h3v2H4z" fill="#2fa84f" /><path d="M13 5h3v2h-3z" fill="#d63c2c" /><path d="M23 7h4v2h-4z" fill="#3a8fd8" />
    <path d="M1 10h31v19H1z" fill="#f7e39a" />
    <path d="M5 31V20q0-1 1-1h22q1 0 1 1v11h-5v-6H10v6z" fill="#a5d8f3" stroke="#5ba3cf" />
  </svg>
);

const ChromeIcon = () => (
  <svg width="30" height="30" viewBox="0 0 30 30">
    <circle cx="15" cy="15" r="15" fill="#ffcd40" />
    <path d="M15 15L2 7.500A15 15 0 0 1 28 7.500H15z" fill="#dd4b3e" />
    <path d="M2 7.500A15 15 0 0 0 14.500 30L21.500 18.500 15 15 8.500 18.700z" fill="#1aa15f" />
    <path d="M15 7.500h13A15 15 0 0 1 14.500 30l7-11.500z" fill="#ffcd40" />
    <circle cx="15" cy="15" r="7" fill="#f4f4f4" />
    <circle cx="15" cy="15" r="5.500" fill="#4c8bf5" />
  </svg>
);

const ExcelIcon = () => (
  <svg width="32" height="32" viewBox="0 0 32 32">
    <path d="M6 2h21v24L23 28H2V6z" fill="#eef7ea" stroke="#4d9a3a" strokeWidth="2" />
    <path d="M14 7.500l17 1v22l-17-2.500z" fill="#fff" stroke="#9fb89a" />
    <path d="M22 11h3.500v4.500H22zM27 11h3v4.500h-3zM22 17h3.500v4H22zM27 17h3v4h-3zM8 23h4v4H8zM15 23h5v4h-5zM22 23h3.500v4H22zM27 23h3v4.500h-3z" fill="#6fa35c" />
    <path d="M6 8h5.500l3 4.500L18 8h3.500l-5 6.500 5.500 7h-5.500L13.300 17 9.500 21.500H6l5.500-7z" fill="#1e5b2e" />
  </svg>
);

const Taskbar = () => (
  <div className="flex items-stretch h-[40px] border-t border-[#3b4f68] bg-linear-to-r from-[#8193a9] via-[#a7c0dc] via-25% to-[#a7c0dc] shadow-[inset_0_1px_0_#c4d3e4]">
    <button aria-label="시작" className="w-[54px] flex items-center justify-center"><StartIcon /></button>
    <button aria-label="Internet Explorer" className="flex items-center justify-center w-[55px] ml-[5px] border border-[#4e647f] rounded-[2px] bg-linear-to-b from-[#c3cfdf] to-[#a0b4cd]"><IeIcon /></button>
    <span className="w-[4px] border-r border-y border-[#4e647f] bg-[#b5c4d8]" />
    <button aria-label="Windows 탐색기" className="flex items-center justify-center w-[60px] ml-[3px] border border-[#4e647f] rounded-[2px] bg-linear-to-b from-[#d3dce8] to-[#aabdd4]"><FolderIcon /></button>
    <button aria-label="Chrome" className="flex items-center justify-center w-[60px] ml-[2px]"><ChromeIcon /></button>
    <button aria-label="Excel" className="flex items-center justify-center w-[60px] ml-[2px] border border-[#4e647f] rounded-[2px] bg-linear-to-br from-white to-[#c0d2e6]"><ExcelIcon /></button>
    <div className="flex-1" />
    <div className="flex items-center pl-[36px] text-white bg-linear-to-r from-transparent to-[#8296ad] to-15%">
      <svg width="18" height="18" viewBox="0 0 18 18">
        <circle cx="8" cy="8" r="7" fill="#3b7fc4" />
        <path d="M3 4c3-3 6-2 6 0s-3 2-3 4-3 1-4-1zM10 6c2-2 5 0 4 3s-3 3-4 1z" fill="#58a845" />
        <path d="M9 14l6-6 2 2-6 6-3 1z" fill="#f6c544" stroke="#8a5a20" strokeWidth=".6" />
      </svg>
      <span className="ml-[4px] text-[20px] leading-5 font-['Liberation_Sans',sans-serif]">A</span>
      <span className="ml-[4px] text-[17px] leading-5">漢</span>
      <button aria-label="숨겨진 아이콘 표시" className="ml-[12px]"><svg width="8" height="5" viewBox="0 0 8 5"><path d="M0 5h8L4 0z" fill="#fff" stroke="#4a5a70" strokeWidth=".5" /></svg></button>
      <svg width="18" height="18" viewBox="0 0 18 18" className="ml-[12px]">
        <path d="M2.500 2v15" stroke="#fff" strokeWidth="2" /><path d="M4 3c4-2 5 2 9 0v7c-4 2-5-2-9 0z" fill="#fff" stroke="#3a4658" strokeWidth=".6" />
        <circle cx="12" cy="12.500" r="4.500" fill="#d63a2c" /><path d="M10 10.500l4 4M14 10.500l-4 4" stroke="#fff" strokeWidth="1.500" />
      </svg>
      <svg width="18" height="18" viewBox="0 0 18 18" className="ml-[7px]" fill="none" stroke="#fff">
        <path d="M6.500 4.500h10v8h-10z" fill="#6d7f95" strokeWidth="1.500" /><path d="M9 15.500h6M12 13v2" strokeWidth="1.500" /><path d="M1.500 2v4h4V2M3.500 6v9H8" strokeWidth="1.500" />
      </svg>
      <svg width="18" height="18" viewBox="0 0 18 18" className="ml-[6px]" fill="none" stroke="#fff">
        <path d="M1 6h3l4-4v14l-4-4H1z" fill="#fff" /><path d="M10.500 6.500c1 1.500 1 3.500 0 5M13 4.500c2 2.500 2 6.500 0 9M15 2.500c3 4 3 9 0 13" />
      </svg>
      <div className="w-[97px] text-center leading-[17px]">
        <div>오후 5:51</div>
        <div>2018-10-11</div>
      </div>
      <button aria-label="바탕 화면 보기" className="w-[14px] h-full border border-[#4d5c70] bg-linear-to-b from-[#b0bccb] via-[#6f7f94] via-50% to-[#8896a8]" />
    </div>
  </div>
);

const App: React.FC = () => (
  <div className={`flex flex-col h-screen min-w-0 overflow-hidden text-[13px] leading-5 bg-[#bfdbff] ${FONT}`}>
    <TitleBar />
    <Ribbon />
    <FormulaBar />
    <main className="flex flex-1 min-h-0 border-t border-[#6e93bf]">
      <Sheet />
      <VerticalScroll />
    </main>
    <SheetTabs />
    <StatusBar />
    <Taskbar />
  </div>
);

export default App;
